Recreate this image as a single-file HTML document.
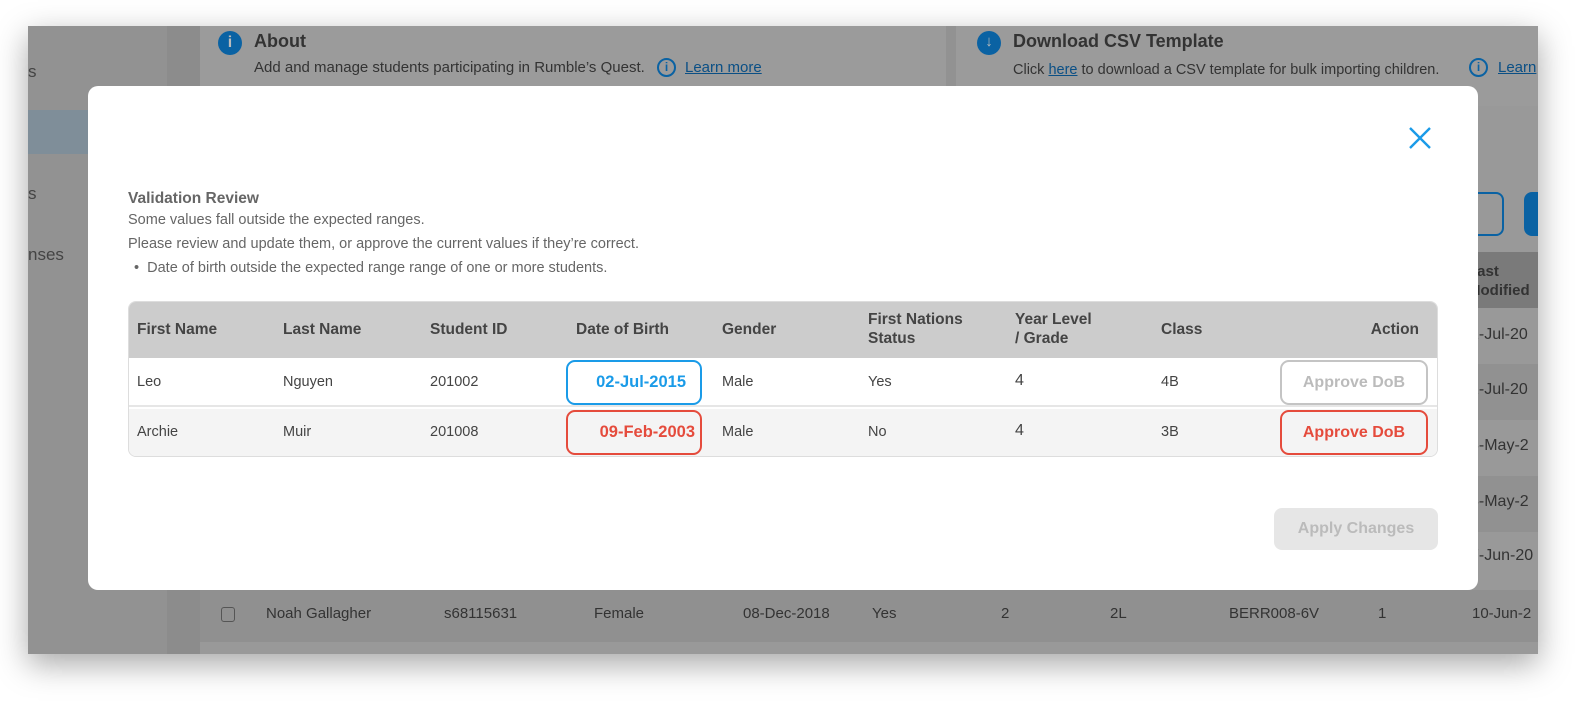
<!DOCTYPE html>
<html><head><meta charset="utf-8"><style>
*{box-sizing:border-box;margin:0;padding:0}
body{width:1578px;height:702px;background:#fff;font-family:"Liberation Sans",sans-serif;position:relative;overflow:hidden}
.win{position:absolute;left:28px;top:26px;width:1510px;height:628px;background:#999;box-shadow:0 10px 30px rgba(0,0,0,.35);overflow:hidden}
.abs{position:absolute}
.t{position:absolute;white-space:nowrap}
.modal{position:absolute;left:88px;top:86px;width:1390px;height:504px;background:#fff;border-radius:10px}
.tbl{position:absolute;left:40px;top:215px;width:1310px;height:156px;border:1px solid #ddd;border-radius:8px;overflow:hidden}
.th{position:absolute;font-size:15.5px;font-weight:bold;color:#444;line-height:19px}
.td{position:absolute;font-size:14.5px;color:#444}
</style></head><body>
<div class="win">
  <div class="abs" style="left:0;top:0;width:139px;height:628px;background:#929292"></div>
  <div class="abs" style="left:0;top:84px;width:139px;height:44px;background:#7f8e99"></div>
  <div class="t" style="left:0;top:36px;font-size:17px;color:#444">s</div>
  <div class="t" style="left:0;top:158px;font-size:17px;color:#444">s</div>
  <div class="t" style="left:0;top:219px;font-size:17px;color:#444">nses</div>
  <div class="abs" style="left:139px;top:0;width:33px;height:628px;background:#8c8c8c"></div>
  <div class="abs" style="left:172px;top:0;width:746px;height:62px;background:#9b9b9b"></div>
  <div class="abs" style="left:918px;top:0;width:10px;height:62px;background:#929292"></div>
  <div class="abs" style="left:928px;top:0;width:582px;height:80px;background:#9b9b9b"></div>
  <div class="abs" style="left:190px;top:5px;width:24px;height:24px;border-radius:50%;background:#0a62a3;color:#bbb;font-weight:bold;font-size:16px;text-align:center;line-height:24px">i</div>
  <div class="t" style="left:226px;top:5px;font-size:18px;font-weight:bold;color:#333">About</div>
  <div class="t" style="left:226px;top:33px;font-size:15px;color:#333">Add and manage students participating in Rumble’s Quest.</div>
  <div class="abs" style="left:629px;top:32px;width:19px;height:19px;border:2px solid #0a62a3;border-radius:50%;color:#0a62a3;font-size:12px;font-weight:bold;text-align:center;line-height:15px">i</div>
  <div class="t" style="left:657px;top:33px;font-size:15px;color:#0a4f85;text-decoration:underline">Learn more</div>
  <div class="abs" style="left:949px;top:5px;width:24px;height:24px;border-radius:50%;background:#0a62a3;color:#bbb;font-size:15px;font-weight:bold;text-align:center;line-height:22px">↓</div>
  <div class="t" style="left:985px;top:5px;font-size:18px;font-weight:bold;color:#333">Download CSV Template</div>
  <div class="t" style="left:985px;top:36px;font-size:14.5px;color:#333">Click <span style="color:#0a4f85;text-decoration:underline">here</span> to download a CSV template for bulk importing children.</div>
  <div class="abs" style="left:1441px;top:32px;width:19px;height:19px;border:2px solid #0a62a3;border-radius:50%;color:#0a62a3;font-size:12px;font-weight:bold;text-align:center;line-height:15px">i</div>
  <div class="t" style="left:1470px;top:33px;font-size:15px;color:#0a4f85;text-decoration:underline">Learn</div>
  <div class="abs" style="left:1420px;top:166px;width:56px;height:44px;border:2px solid #0a62a3;border-radius:8px"></div>
  <div class="abs" style="left:1496px;top:166px;width:30px;height:44px;background:#0a62a3;border-radius:8px"></div>
  <div class="abs" style="left:1400px;top:226px;width:110px;height:56px;background:#7a7a7a"></div>
  <div class="t" style="left:1440px;top:236px;font-size:15px;font-weight:bold;color:#333;line-height:19px">Last<br>Modified</div>
  <div class="abs" style="left:1400px;top:282px;width:110px;height:56px;background:#999"></div>
  <div class="abs" style="left:1400px;top:338px;width:110px;height:56px;background:#919191"></div>
  <div class="abs" style="left:1400px;top:394px;width:110px;height:56px;background:#999"></div>
  <div class="abs" style="left:1400px;top:450px;width:110px;height:56px;background:#919191"></div>
  <div class="abs" style="left:1400px;top:506px;width:110px;height:56px;background:#999"></div>
  <div class="t" style="left:1442px;top:300px;font-size:16px;color:#333">2-Jul-20</div>
  <div class="t" style="left:1442px;top:355px;font-size:16px;color:#333">2-Jul-20</div>
  <div class="t" style="left:1442px;top:411px;font-size:16px;color:#333">8-May-2</div>
  <div class="t" style="left:1442px;top:467px;font-size:16px;color:#333">8-May-2</div>
  <div class="t" style="left:1442px;top:521px;font-size:16px;color:#333">7-Jun-20</div>
  <div class="abs" style="left:172px;top:564px;width:1338px;height:52px;background:#909090"></div>
  <div class="abs" style="left:193px;top:581px;width:14px;height:15px;border:1px solid #555;border-radius:3px"></div>
  <div class="t" style="left:238px;top:579px;font-size:15px;color:#333">Noah Gallagher</div>
  <div class="t" style="left:416px;top:579px;font-size:15px;color:#333">s68115631</div>
  <div class="t" style="left:566px;top:579px;font-size:15px;color:#333">Female</div>
  <div class="t" style="left:715px;top:579px;font-size:15px;color:#333">08-Dec-2018</div>
  <div class="t" style="left:844px;top:579px;font-size:15px;color:#333">Yes</div>
  <div class="t" style="left:973px;top:579px;font-size:15px;color:#333">2</div>
  <div class="t" style="left:1082px;top:579px;font-size:15px;color:#333">2L</div>
  <div class="t" style="left:1201px;top:579px;font-size:15px;color:#333">BERR008-6V</div>
  <div class="t" style="left:1350px;top:579px;font-size:15px;color:#333">1</div>
  <div class="t" style="left:1444px;top:579px;font-size:15px;color:#333">10-Jun-2</div>
</div>
<div class="modal">
  <svg class="abs" style="left:1321px;top:41px" width="22" height="22" viewBox="0 0 22 22"><path d="M1 1L21 21M21 1L1 21" stroke="#1a9be8" stroke-width="2.4"/></svg>
  <div class="t" style="left:40px;top:104px;font-size:15.5px;font-weight:bold;color:#666">Validation Review</div>
  <div class="t" style="left:40px;top:126px;font-size:14.5px;color:#666">Some values fall outside the expected ranges.</div>
  <div class="t" style="left:40px;top:150px;font-size:14.5px;color:#666">Please review and update them, or approve the current values if they’re correct.</div>
  <div class="t" style="left:46px;top:174px;font-size:14.5px;color:#666">•&nbsp; Date of birth outside the expected range range of one or more students.</div>
  <div class="tbl">
    <div class="abs" style="left:0;top:0;width:1310px;height:56px;background:#ccc"></div>
    <div class="abs" style="left:0;top:56px;width:1310px;height:49px;background:#fff;border-bottom:2px solid #e6e6e6"></div>
    <div class="abs" style="left:0;top:107px;width:1310px;height:49px;background:#f4f4f4"></div>
    <div class="th" style="left:8px;top:18px">First Name</div>
    <div class="th" style="left:154px;top:18px">Last Name</div>
    <div class="th" style="left:301px;top:18px">Student ID</div>
    <div class="th" style="left:447px;top:18px">Date of Birth</div>
    <div class="th" style="left:593px;top:18px">Gender</div>
    <div class="th" style="left:739px;top:8px">First Nations<br>Status</div>
    <div class="th" style="left:886px;top:8px">Year Level<br>/ Grade</div>
    <div class="th" style="left:1032px;top:18px">Class</div>
    <div class="th" style="right:18px;top:18px">Action</div>
    <div class="td" style="left:8px;top:72px">Leo</div>
    <div class="td" style="left:154px;top:72px">Nguyen</div>
    <div class="td" style="left:301px;top:72px">201002</div>
    <div class="td" style="left:593px;top:72px">Male</div>
    <div class="td" style="left:739px;top:72px">Yes</div>
    <div class="td" style="left:886px;top:70px;font-size:16px">4</div>
    <div class="td" style="left:1032px;top:72px">4B</div>
    <div class="td" style="left:8px;top:122px">Archie</div>
    <div class="td" style="left:154px;top:122px">Muir</div>
    <div class="td" style="left:301px;top:122px">201008</div>
    <div class="td" style="left:593px;top:122px">Male</div>
    <div class="td" style="left:739px;top:122px">No</div>
    <div class="td" style="left:886px;top:120px;font-size:16px">4</div>
    <div class="td" style="left:1032px;top:122px">3B</div>
    <div class="abs" style="left:437px;top:58px;width:136px;height:45px;border:2px solid #1a9be8;border-radius:9px;color:#1a9be8;font-size:16.5px;font-weight:bold;text-align:right;padding-right:14px;line-height:41px">02-Jul-2015</div>
    <div class="abs" style="left:437px;top:108px;width:136px;height:45px;border:2px solid #e54b3c;border-radius:9px;color:#e54b3c;font-size:16.5px;font-weight:bold;text-align:right;padding-right:5px;line-height:41px;white-space:nowrap">09-Feb-2003</div>
    <div class="abs" style="left:1151px;top:58px;width:148px;height:45px;border:2px solid #c4c4c4;border-radius:9px;color:#bbb;font-size:16px;font-weight:bold;text-align:center;line-height:41px">Approve DoB</div>
    <div class="abs" style="left:1151px;top:108px;width:148px;height:45px;border:2px solid #e54b3c;border-radius:9px;color:#e54b3c;font-size:16px;font-weight:bold;text-align:center;line-height:41px">Approve DoB</div>
  </div>
  <div class="abs" style="left:1186px;top:422px;width:164px;height:42px;background:#e6e6e6;border-radius:8px;color:#bbb;font-size:16px;font-weight:bold;text-align:center;line-height:42px">Apply Changes</div>
</div>
</body></html>
